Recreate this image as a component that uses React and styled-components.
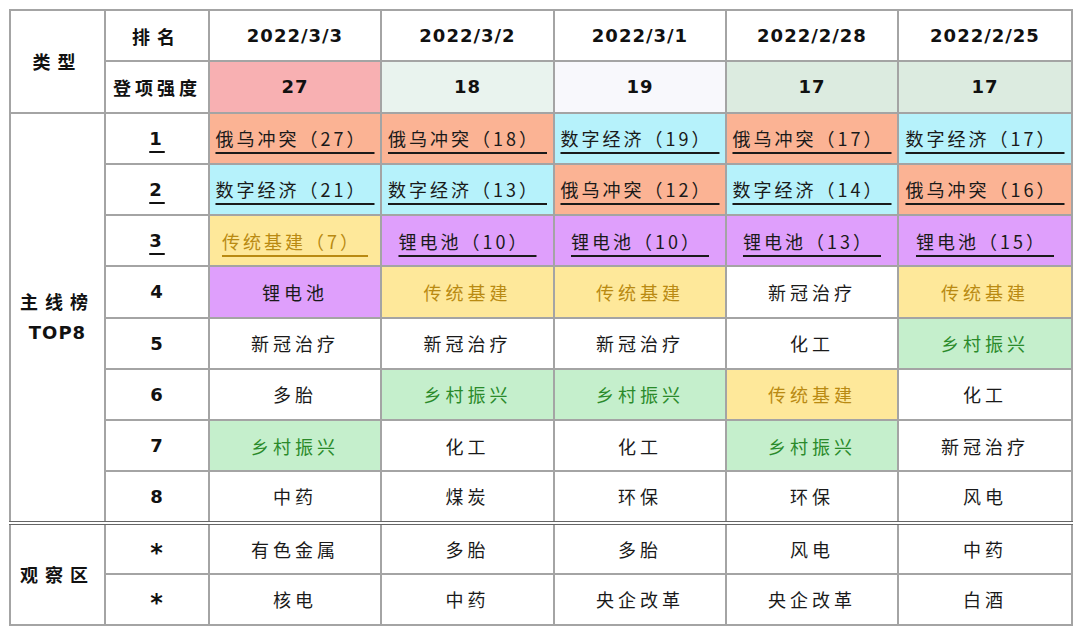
import React from 'react';
import styled, { createGlobalStyle } from 'styled-components';

const GlobalStyle = createGlobalStyle`
  html, body {
    margin: 0;
    padding: 0;
    background: #ffffff;
  }
  body {
    font-family: "Noto Sans CJK SC", "Noto Sans", sans-serif;
    color: #111;
  }
`;

const CJK = `"Noto Sans CJK SC", "Noto Sans", sans-serif`;
const LATIN = `"DejaVu Sans", "Noto Sans CJK SC", sans-serif`;

const fills = {
  red: '#f8b0b2',
  mint: '#e9f3ee',
  snow: '#f8f8fc',
  sage: '#dcebe0',
  orange: '#fbb394',
  cyan: '#b6f2fb',
  yellow: '#fee89a',
  purple: '#df9ffc',
  green: '#c5efcc',
  white: '#ffffff',
};

const inks = {
  yellow: '#b98a12',
  green: '#2a8a2a',
};

const Page = styled.div`
  padding: 9px 0 0 9px;
`;

const Table = styled.table`
  border-collapse: collapse;
  table-layout: fixed;
  width: 1062px;
  height: 617px;
  border: 2px solid #a4a4a4;
`;

const Row = styled.tr`
  height: 51px;
`;

const Cell = styled.td`
  border: 2px solid #a4a4a4;
  border-top: ${p => (p.$split ? '4px double #666' : '2px solid #a4a4a4')};
  background: ${p => fills[p.$fill] || '#fff'};
  color: ${p => inks[p.$fill] || '#1a1a1a'};
  text-align: center;
  vertical-align: middle;
  padding: 0;
  font-family: ${CJK};
  font-size: 18px;
  letter-spacing: 4px;
  white-space: nowrap;
`;

const HeadCell = styled(Cell)`
  font-weight: 700;
  color: #111;
  letter-spacing: ${p => (p.$wide ? '7px' : '4px')};
  line-height: 30px;
`;

const NumCell = styled(Cell)`
  font-family: ${LATIN};
  font-weight: 700;
  font-size: 18px;
  letter-spacing: 1px;
  color: #111;
`;

const Star = styled.span`
  font-size: 24px;
  line-height: 1;
  position: relative;
  top: 4px;
`;

const Marked = styled.span`
  text-decoration: underline;
  text-decoration-thickness: 2px;
  text-underline-offset: 6px;
  letter-spacing: 3px;
  white-space: pre;
`;

const Latin = styled.span`
  font-family: ${LATIN};
  font-weight: 700;
  letter-spacing: 1px;
`;

const dates = ['2022/3/3', '2022/3/2', '2022/3/1', '2022/2/28', '2022/2/25'];
const strength = [
  ['27', 'red'],
  ['18', 'mint'],
  ['19', 'snow'],
  ['17', 'sage'],
  ['17', 'sage'],
];

const O = 'orange', C = 'cyan', Y = 'yellow', P = 'purple', G = 'green', W = 'white';

const topRows = [
  { rank: '1', mark: true, cells: [['俄乌冲突（27）', O], ['俄乌冲突（18）', O], ['数字经济（19）', C], ['俄乌冲突（17）', O], ['数字经济（17）', C]] },
  { rank: '2', mark: true, cells: [['数字经济（21）', C], ['数字经济（13）', C], ['俄乌冲突（12）', O], ['数字经济（14）', C], ['俄乌冲突（16）', O]] },
  { rank: '3', mark: true, cells: [['传统基建（7）', Y], ['锂电池（10）', P], ['锂电池（10）', P], ['锂电池（13）', P], ['锂电池（15）', P]] },
  { rank: '4', cells: [['锂电池', P], ['传统基建', Y], ['传统基建', Y], ['新冠治疗', W], ['传统基建', Y]] },
  { rank: '5', cells: [['新冠治疗', W], ['新冠治疗', W], ['新冠治疗', W], ['化工', W], ['乡村振兴', G]] },
  { rank: '6', cells: [['多胎', W], ['乡村振兴', G], ['乡村振兴', G], ['传统基建', Y], ['化工', W]] },
  { rank: '7', cells: [['乡村振兴', G], ['化工', W], ['化工', W], ['乡村振兴', G], ['新冠治疗', W]] },
  { rank: '8', cells: [['中药', W], ['煤炭', W], ['环保', W], ['环保', W], ['风电', W]] },
];

const watchRows = [
  ['有色金属', '多胎', '多胎', '风电', '中药'],
  ['核电', '中药', '央企改革', '央企改革', '白酒'],
];

export default function App() {
  return (
    <Page>
      <GlobalStyle />
      <Table>
        <colgroup>
          <col style={{ width: 95 }} />
          <col style={{ width: 104 }} />
          <col style={{ width: 172 }} />
          <col style={{ width: 173 }} />
          <col style={{ width: 172 }} />
          <col style={{ width: 172 }} />
          <col style={{ width: 174 }} />
        </colgroup>
        <tbody>
          <Row>
            <HeadCell rowSpan={2} $wide>类型</HeadCell>
            <HeadCell $wide>排名</HeadCell>
            {dates.map(d => (
              <NumCell key={d}>{d}</NumCell>
            ))}
          </Row>
          <Row>
            <HeadCell>登项强度</HeadCell>
            {strength.map(([v, f], i) => (
              <NumCell key={i} $fill={f}>{v}</NumCell>
            ))}
          </Row>
          {topRows.map((r, ri) => (
            <Row key={r.rank}>
              {ri === 0 && (
                <HeadCell rowSpan={8} $wide>
                  主线榜
                  <br />
                  <Latin>TOP8</Latin>
                </HeadCell>
              )}
              <NumCell>{r.mark ? <Marked>{r.rank}</Marked> : r.rank}</NumCell>
              {r.cells.map(([t, f], ci) => (
                <Cell key={ci} $fill={f}>
                  {r.mark ? <Marked>{t + ' '}</Marked> : t}
                </Cell>
              ))}
            </Row>
          ))}
          {watchRows.map((cells, ri) => (
            <Row key={ri}>
              {ri === 0 && (
                <HeadCell rowSpan={2} $wide $split>观察区</HeadCell>
              )}
              <NumCell $split={ri === 0}><Star>*</Star></NumCell>
              {cells.map((t, ci) => (
                <Cell key={ci} $split={ri === 0}>{t}</Cell>
              ))}
            </Row>
          ))}
        </tbody>
      </Table>
    </Page>
  );
}
